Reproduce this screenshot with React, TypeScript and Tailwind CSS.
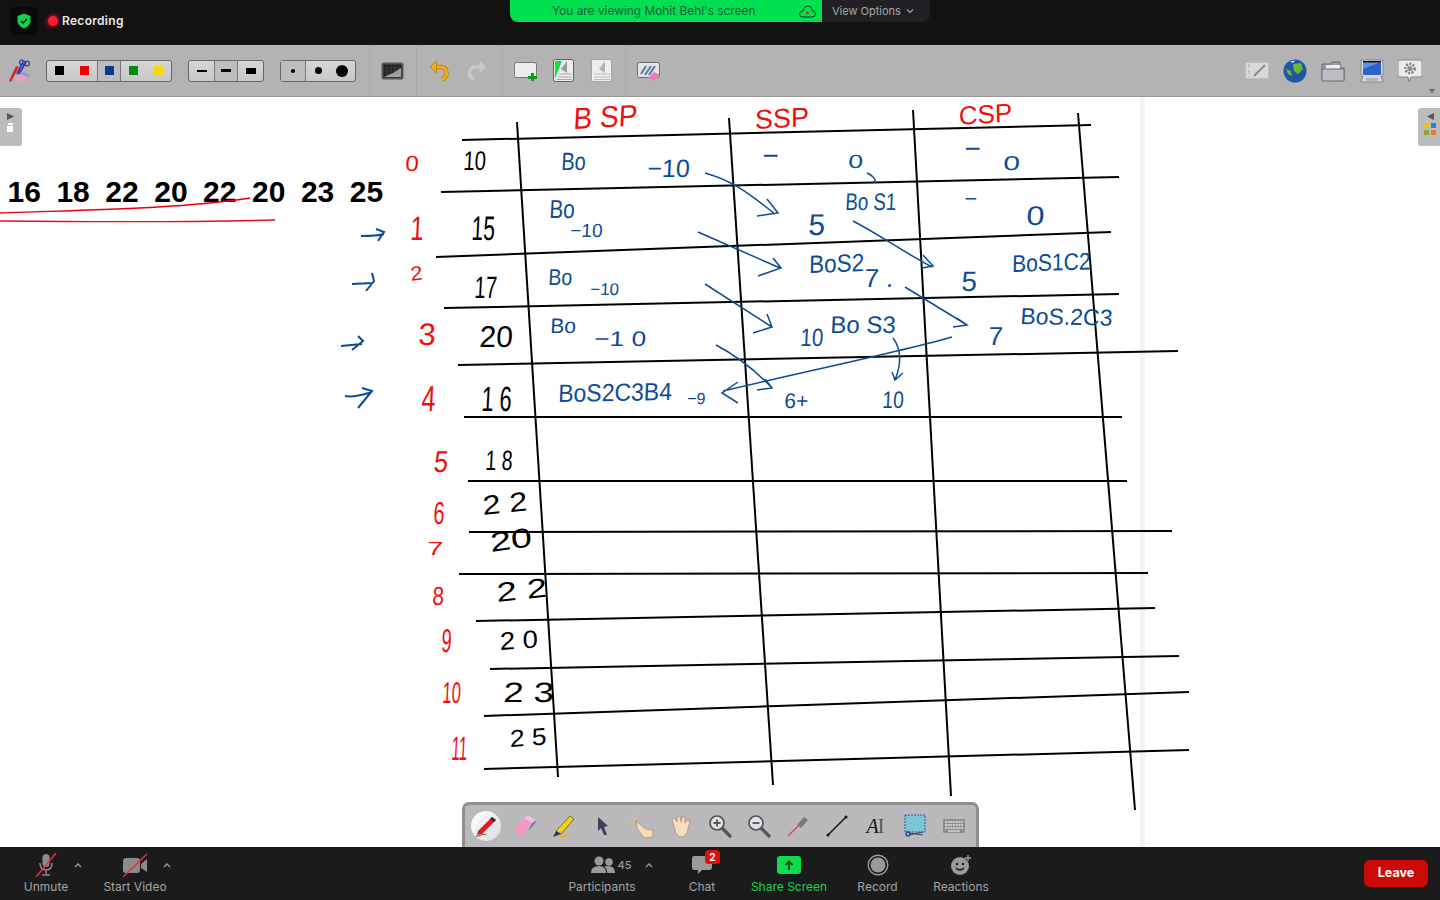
import type { ReactNode } from "react";

const BLUE = "#0d4c94";
const RED = "#f20d0d";

type Ink = { t: string; x: number; y: number; s: number; r?: number; sk?: number; sx?: number };

const gridLines = [
  "462,140 1091,125",
  "441,192 1119,177",
  "436,257 1111,232",
  "444,308 1119,294",
  "458,365 1178,351",
  "464,417 1122,417",
  "468,481 1127,481",
  "469,532 1172,531",
  "459,574 1148,573",
  "476,621 1155,608",
  "490,669 1179,656",
  "484,716 1189,692",
  "484,769 1189,750",
  "517,122 558,777",
  "729,118 773,785",
  "913,110 951,796",
  "1078,113 1135,810",
];

const redInk: Ink[] = [
  { t: "B SP", x: 573, y: 129, s: 30, r: -3, sk: -6, sx: 0.94 },
  { t: "SSP", x: 755, y: 129, s: 27, r: -3 },
  { t: "CSP", x: 959, y: 125, s: 26, r: -4 },
  { t: "0", x: 405, y: 171, s: 22, sx: 1.1 },
  { t: "1", x: 410, y: 240, s: 34, sx: 0.7 },
  { t: "2", x: 411, y: 281, s: 20, r: -8, sx: 1.1 },
  { t: "3", x: 418, y: 345, s: 31 },
  { t: "4", x: 421, y: 411, s: 36, sx: 0.7 },
  { t: "5", x: 433, y: 472, s: 30, sk: -6, sx: 0.85 },
  { t: "6", x: 433, y: 524, s: 32, sx: 0.62 },
  { t: "7", x: 427, y: 555, s: 19, sx: 1.5 },
  { t: "8", x: 432, y: 605, s: 26, sx: 0.8 },
  { t: "9", x: 441, y: 652, s: 33, sx: 0.55 },
  { t: "10", x: 442, y: 703, s: 30, sx: 0.55 },
  { t: "11", x: 451, y: 760, s: 34, sx: 0.45 },
];

const blackInk: Ink[] = [
  { t: "10", x: 463, y: 170, s: 27, sx: 0.75 },
  { t: "15", x: 471, y: 240, s: 34, sx: 0.62 },
  { t: "17", x: 474, y: 298, s: 31, sx: 0.65 },
  { t: "20", x: 479, y: 347, s: 30 },
  { t: "1 6", x: 481, y: 411, s: 35, sx: 0.62 },
  { t: "1 8", x: 485, y: 470, s: 28, sx: 0.7 },
  { t: "2 2", x: 483, y: 515, s: 27, r: -6, sx: 1.2 },
  { t: "20", x: 491, y: 552, s: 27, r: -8, sx: 1.4 },
  { t: "2 2", x: 497, y: 602, s: 27, r: -6, sx: 1.35 },
  { t: "2 0", x: 500, y: 650, s: 25, r: -4, sx: 1.1 },
  { t: "2 3", x: 503, y: 702, s: 28, sx: 1.3 },
  { t: "2 5", x: 510, y: 747, s: 24, r: -4, sx: 1.1 },
];

const blueInk: Ink[] = [
  { t: "Bo", x: 561, y: 170, s: 25, sx: 0.8 },
  { t: "−10", x: 647, y: 177, s: 25 },
  { t: "−", x: 762, y: 165, s: 28 },
  { t: "0", x: 848, y: 168, s: 19, sx: 1.4 },
  { t: "−", x: 964, y: 158, s: 28 },
  { t: "0", x: 1003, y: 170, s: 20, sx: 1.5 },
  { t: "Bo", x: 549, y: 218, s: 26, sx: 0.8 },
  { t: "−10", x: 570, y: 237, s: 19 },
  { t: "5", x: 808, y: 235, s: 30 },
  { t: "Bo S1", x: 845, y: 210, s: 24, sx: 0.78 },
  { t: "−", x: 964, y: 206, s: 22 },
  { t: "0", x: 1026, y: 225, s: 27, sx: 1.2 },
  { t: "Bo", x: 548, y: 285, s: 23, sx: 0.85 },
  { t: "−10", x: 590, y: 295, s: 17 },
  { t: "BoS2", x: 809, y: 273, s: 25, r: -2, sx: 0.9 },
  { t: "7 .", x: 864, y: 287, s: 26 },
  { t: "5", x: 961, y: 291, s: 28 },
  { t: "BoS1C2", x: 1012, y: 272, s: 24, r: -2, sx: 0.88 },
  { t: "Bo", x: 550, y: 333, s: 21 },
  { t: "−1 0", x: 594, y: 346, s: 21, sx: 1.25 },
  { t: "10", x: 800, y: 346, s: 25, sx: 0.82 },
  { t: "Bo S3", x: 830, y: 333, s: 24 },
  { t: "7", x: 988, y: 345, s: 26 },
  { t: "BoS.2C3", x: 1020, y: 324, s: 23, r: 1 },
  { t: "BoS2C3B4", x: 558, y: 402, s: 25, r: -1, sx: 0.92 },
  { t: "−9", x: 687, y: 404, s: 16 },
  { t: "6+", x: 784, y: 408, s: 21 },
  { t: "10", x: 882, y: 408, s: 24, sx: 0.8 },
];

const thinArrows = [
  "M705 173 C730 180 745 190 775 214 M767 199 L778 213 L757 216",
  "M698 232 L780 268 M773 258 L781 268 L758 276",
  "M705 284 L772 327 M767 314 L772 327 L753 333",
  "M716 345 C735 355 755 370 772 388 M765 379 L772 388 L757 390",
  "M952 337 C900 352 820 368 723 391 M738 382 L722 393 L738 403",
  "M853 221 C880 235 900 250 932 267 M923 255 L933 266 L922 268",
  "M905 287 L967 325 M957 318 L967 325 L953 327",
  "M893 338 C902 350 901 365 895 380 M892 372 L895 380 L903 373",
  "M867 173 C872 175 875 178 876 183",
];

const sideArrows = [
  "M361 236 C370 236 378 236 384 234 M376 229 L384 232 L378 241",
  "M352 284 L373 283 M372 273 L374 281 L366 291",
  "M341 346 L362 344 M358 336 L363 341 L352 350",
  "M345 396 C355 398 365 394 372 392 M362 388 L372 391 L358 408",
];

function InkText({ items, color }: { items: Ink[]; color: string }) {
  return (
    <g fill={color}>
      {items.map((i, n) => (
        <text
          key={n}
          x={0}
          y={0}
          fontSize={i.s}
          transform={`translate(${i.x} ${i.y}) rotate(${i.r ?? 0}) skewX(${i.sk ?? -3}) scale(${i.sx ?? 1} 1)`}
        >
          {i.t}
        </text>
      ))}
    </g>
  );
}

function Board() {
  return (
    <svg viewBox="0 97 1440 750" className="block w-full h-full [font-family:'Liberation_Sans',sans-serif]">
      <rect x="1140" y="97" width="5" height="750" fill="#f3f3f3" />
      <text x="7.5" y="202" fontSize="30" fontWeight="700" wordSpacing="7.2" fill="#000">
        16 18 22 20 22 20 23 25
      </text>
      <path d="M0 213 C80 210 180 209 250 198" stroke="#e8000f" strokeWidth="1.4" fill="none" />
      <path d="M0 221 C100 222 200 222 275 220" stroke="#e2101c" strokeWidth="1.4" fill="none" />
      {gridLines.map((l) => (
        <polyline key={l} points={l} stroke="#000" strokeWidth="2" fill="none" />
      ))}
      <InkText items={redInk} color={RED} />
      <InkText items={blackInk} color="#000" />
      <InkText items={blueInk} color={BLUE} />
      {thinArrows.map((d) => (
        <path key={d} d={d} stroke={BLUE} strokeWidth="1.5" fill="none" />
      ))}
      {sideArrows.map((d) => (
        <path key={d} d={d} stroke={BLUE} strokeWidth="2" fill="none" />
      ))}
    </svg>
  );
}

function Ic({ w, h, children, className }: { w: number; h: number; children: ReactNode; className?: string }) {
  return (
    <svg width={w} height={h} viewBox={`0 0 ${w} ${h}`} className={`block shrink-0 ${className ?? ""}`}>
      {children}
    </svg>
  );
}

function Separator({ className }: { className: string }) {
  return <div className={`h-[52px] border-l border-dotted border-[#a2a2a2] ${className}`} />;
}

function ToolbarIcons() {
  return (
    <div className="h-[52px] bg-[#b3b3b3] border-b border-[#989898] flex items-center shrink-0">
      <Ic w={22} h={24} className="ml-2">
        <path d="M1 22 L8 7 L11 8 L3 23 Z" fill="#d8242c" />
        <path d="M9 15 L15 3 M18 3 L11 15" stroke="#3a3fa8" strokeWidth="1.8" fill="none" />
        <circle cx="14" cy="3.5" r="2.4" fill="none" stroke="#3a3fa8" strokeWidth="1.3" />
        <circle cx="19" cy="4.5" r="2.4" fill="none" stroke="#3a3fa8" strokeWidth="1.3" />
        <path d="M7 20 L15 13 L22 16 L14 23 Z" fill="#f39ac6" />
        <path d="M15 13 L22 16 L20 18 L13 15 Z" fill="#7d9ad0" />
      </Ic>
      <div className="ml-4 w-[126px] h-[22px] flex rounded-[3px] border border-[#666] bg-gradient-to-b from-[#d6d6d6] to-[#c8c8c8]">
        <div className="w-[50px] flex items-center justify-around">
          <span className="w-[9px] h-[9px] bg-black" />
          <span className="w-[9px] h-[9px] bg-[#f00000]" />
        </div>
        <div className="w-6 flex items-center justify-center border-x border-[#777] bg-[#bdbdbd]">
          <span className="w-[9px] h-[9px] bg-[#0b3a8c]" />
        </div>
        <div className="flex-1 flex items-center justify-around">
          <span className="w-[9px] h-[9px] bg-[#0a8a0a]" />
          <span className="w-[9px] h-[9px] bg-[#f5dc00]" />
        </div>
      </div>
      <div className="ml-4 w-[76px] h-[22px] flex rounded-[3px] border border-[#666] bg-gradient-to-b from-[#d6d6d6] to-[#c8c8c8]">
        <div className="w-[25px] flex items-center justify-center">
          <span className="w-[10px] h-[2px] bg-black" />
        </div>
        <div className="w-6 flex items-center justify-center border-x border-[#777] bg-[#bdbdbd]">
          <span className="w-[10px] h-[3px] bg-black" />
        </div>
        <div className="flex-1 flex items-center justify-center">
          <span className="w-[10px] h-[6px] bg-black" />
        </div>
      </div>
      <div className="ml-4 w-[76px] h-[22px] flex rounded-[3px] border border-[#666] bg-gradient-to-b from-[#d6d6d6] to-[#c8c8c8]">
        <div className="w-[25px] flex items-center justify-center border-r border-[#777] bg-[#bdbdbd]">
          <span className="w-1 h-1 rounded-full bg-black" />
        </div>
        <div className="flex-1 flex items-center justify-around pl-[2px]">
          <span className="w-[7px] h-[7px] rounded-full bg-black" />
          <span className="w-3 h-3 rounded-full bg-black" />
        </div>
      </div>
      <Separator className="ml-[13px]" />
      <Ic w={23} h={18} className="ml-[11px]">
        <rect x="0.5" y="0.5" width="22" height="17" rx="2" fill="#55575a" />
        <rect x="2.5" y="2.5" width="18" height="13" fill="#1d1d1d" />
        <path d="M6 3 V15 M10 3 V15 M14 3 V15 M18 3 V15 M3 6 H20 M3 9 H20 M3 12 H20" stroke="#4a4a4a" strokeWidth="0.7" />
        <path d="M3 15 L12 11 L20 6 L20 15 Z" fill="#a0a0a0" />
      </Ic>
      <Separator className="ml-3" />
      <Ic w={20} h={22} className="ml-3">
        <path d="M5.5 7 H11 Q17.5 7 17.5 13 Q17.5 17.5 13 19.5" stroke="#b9780a" strokeWidth="4.4" fill="none" />
        <path d="M5.5 7 H11 Q17.5 7 17.5 13 Q17.5 17.5 13 19.5" stroke="#f0ad1c" strokeWidth="3" fill="none" />
        <path d="M7.5 1 L1 7 L7.5 13 Z" fill="#f0ad1c" stroke="#b9780a" strokeWidth="0.8" />
      </Ic>
      <Ic w={20} h={22} className="ml-[18px]">
        <path d="M14.5 7 H9 Q2.5 7 2.5 13 Q2.5 17.5 7 19.5" stroke="#c8c8c8" strokeWidth="3.6" fill="none" />
        <path d="M12.5 1 L19 7 L12.5 13 Z" fill="#c8c8c8" />
      </Ic>
      <Separator className="ml-[15px]" />
      <Ic w={24} h={20} className="ml-[11px]">
        <rect x="0.5" y="1.5" width="22" height="15" rx="2" fill="#ececec" stroke="#777" />
        <path d="M17 12 h3 v3 h3 v3 h-3 v2 h-3 v-2 h-3 v-3 h3 Z" fill="#0f9d1f" />
      </Ic>
      <Ic w={21} h={23} className="ml-[15px]">
        <rect x="0.5" y="0.5" width="20" height="22" rx="2" fill="#eeeeee" stroke="#5c5c66" />
        <path d="M2 2 H9 L2 20 Z" fill="#12e040" />
        <path d="M14 2 L8 10 L14 14 Z" fill="#9a9a9a" />
        <path d="M6 15 H19 M5 18 H19 M4 20.5 H19" stroke="#a8a8a8" />
      </Ic>
      <Ic w={21} h={23} className="ml-[17px]">
        <rect x="0.5" y="0.5" width="20" height="22" rx="2" fill="#eeeeee" stroke="#a5a5a5" />
        <path d="M14 2 L8 10 L14 14 Z" fill="#b5b5b5" />
        <path d="M3 15 H19 M3 18 H19 M3 20.5 H19" stroke="#bdbdbd" />
      </Ic>
      <Separator className="ml-[13px]" />
      <Ic w={24} h={22} className="ml-[11px]">
        <rect x="0.5" y="2.5" width="22" height="15" rx="2" fill="#e5e5e8" stroke="#6b6b6b" />
        <path d="M4 14 L9 6 M8 15 L14 6 M12 15 L18 6" stroke="#5f7cab" strokeWidth="2.2" />
        <path d="M11 18 L17 12 L23 15 L17 21 Z" fill="#f279b5" />
      </Ic>

      <div className="ml-auto flex items-center pr-[18px]">
        <Ic w={24} h={17}>
          <rect x="0.5" y="0.5" width="23" height="16" rx="1" fill="#d9d9d9" stroke="#bdbdbd" />
          <path d="M4 2 V15" stroke="#aaa" strokeDasharray="4 2" />
          <path d="M9 14 L20 3" stroke="#8c8c8c" strokeWidth="2" />
        </Ic>
        <Ic w={24} h={24} className="ml-[14px]">
          <circle cx="12" cy="12" r="11.5" fill="#1f56a8" />
          <path d="M10 5 L18 4 L20 10 L15 15 L11 12 Z M3 10 L8 12 L9 17 L5 15 Z" fill="#6cb63a" />
          <path d="M7 2.5 L12 1.5 L10 4 Z" fill="#dfe8f5" />
        </Ic>
        <Ic w={24} h={22} className="ml-[14px]">
          <path d="M1 4 H9 L11 2 H19 V8 H23 V20 H1 Z" fill="#9b9ba3" stroke="#6d6d74" />
          <path d="M5 5 H19 V9 H5 Z" fill="#ececec" />
          <path d="M1 9 H23 V21 H1 Z" fill="#bcbcc4" stroke="#6d6d74" />
        </Ic>
        <Ic w={24} h={24} className="ml-[15px]">
          <path d="M1 1 H23 V17 H21 L23 23 H1 L3 17 H1 Z" fill="#d8d8d8" stroke="#888" />
          <rect x="3" y="3" width="18" height="13" fill="#2b63c8" />
          <path d="M3 3 H21 L3 10 Z" fill="#5f94e6" />
          <rect x="3" y="2" width="18" height="1.5" fill="#111" />
          <path d="M6 19 H18 V22 H6 Z" fill="#b3b3b3" />
        </Ic>
        <Ic w={24} h={24} className="ml-[14px]">
          <path d="M2 1 H22 Q24 1 24 3 V16 Q24 18 22 18 H13 L11 23 L10 18 H2 Q0 18 0 16 V3 Q0 1 2 1 Z" fill="#ececec" stroke="#888" />
          <circle cx="12" cy="9.5" r="4.6" fill="none" stroke="#7c7c7c" strokeWidth="2.5" strokeDasharray="2 1.4" />
          <circle cx="12" cy="9.5" r="2.6" fill="#8d8d8d" />
        </Ic>
      </div>
    </div>
  );
}

function SideTabs() {
  return (
    <>
      <div className="absolute left-0 top-[11px] w-[22px] h-[38px] bg-[#bcbcbc] rounded-r-[3px] flex flex-col items-center pt-[5px] pr-[2px]">
        <Ic w={7} h={7}><path d="M0 0 L7 3.5 L0 7 Z" fill="#555" /></Ic>
        <span className="mt-[3px] w-[5px] h-[2px] bg-white" />
        <span className="mt-[1px] w-[6px] h-[6px] bg-white" />
      </div>
      <div className="absolute right-0 top-[11px] w-[22px] h-[38px] bg-[#bcbcbc] rounded-l-[3px] flex flex-col items-center pt-[5px] pl-[2px]">
        <Ic w={7} h={7}><path d="M7 0 L0 3.5 L7 7 Z" fill="#555" /></Ic>
        <div className="mt-[3px] grid grid-cols-2 gap-[2px]">
          <span className="w-[5px] h-[5px] bg-[#e8c020]" />
          <span className="w-[5px] h-[5px] bg-[#1e88d8]" />
          <span className="w-[5px] h-[5px] bg-[#88a838]" />
          <span className="w-[5px] h-[5px] bg-[#f07828]" />
        </div>
      </div>
    </>
  );
}

function Palette() {
  const tools: ReactNode[] = [
    <div key="pen" className="w-[30px] h-[30px] rounded-full bg-gradient-to-br from-white to-[#dcdcdc] flex items-center justify-center">
      <Ic w={24} h={24}>
        <path d="M4 17 L18 3 L22 6 L8 20 L3 21 Z" fill="#e01b24" />
        <path d="M18 3 L22 6 L20 8 L16 5 Z" fill="#333" />
        <path d="M2 22 C7 23 9 18 12 21" stroke="#444" fill="none" />
      </Ic>
    </div>,
    <Ic key="eraser" w={24} h={22}>
      <path d="M1 14 L11 3 L19 8 L9 21 Z" fill="#f59ac4" />
      <path d="M11 3 L15 1 L23 5 L19 8 Z" fill="#f9bddb" />
      <path d="M19 8 L23 5 L22 9 L15 16 Z" fill="#5f86c6" />
    </Ic>,
    <Ic key="marker" w={24} h={24}>
      <path d="M4 17 L18 2 L22 5 L9 20 Z" fill="#f2d40f" stroke="#5a5a20" strokeWidth="0.8" />
      <path d="M1 23 L4 17 L9 20 Z" fill="#3a3a30" />
      <path d="M6 23 L18 20 L14 23 Z" fill="#e6b80a" />
    </Ic>,
    <Ic key="arrow" w={14} h={20}>
      <path d="M2 1 L12 10 L8 11 L11 19 L8 19 L5 12 L2 15 Z" fill="#3e4058" />
    </Ic>,
    <Ic key="point" w={26} h={26}>
      <path d="M2 3 L5 6 M8 1 V5 M1 9 H5" stroke="#e6d320" />
      <path d="M7 8 L17 16 L24 17 L24 24 L15 25 L10 18 L8 15 Z" fill="#f6d9bd" stroke="#a8876a" strokeWidth="0.7" />
    </Ic>,
    <Ic key="hand" w={22} h={24}>
      <path d="M3 9 L2 5 L5 4 L7 8 L7 3 L10 2 L11 8 L12 3 L15 3 L15 9 L17 6 L20 7 L18 15 Q17 22 11 23 Q6 22 5 16 Z" fill="#f6dcc2" stroke="#a8876a" strokeWidth="0.7" />
    </Ic>,
    <Ic key="zoomin" w={24} h={24}>
      <path d="M14 14 L22 22" stroke="#555" strokeWidth="3.2" strokeLinecap="round" />
      <circle cx="9" cy="9" r="7" fill="#dfe2e6" stroke="#555" strokeWidth="1.7" />
      <path d="M5.5 9 H12.5 M9 5.5 V12.5" stroke="#555" strokeWidth="1.8" />
    </Ic>,
    <Ic key="zoomout" w={24} h={24}>
      <path d="M14 14 L22 22" stroke="#555" strokeWidth="3.2" strokeLinecap="round" />
      <circle cx="9" cy="9" r="7" fill="#dfe2e6" stroke="#555" strokeWidth="1.7" />
      <path d="M5.5 9 H12.5" stroke="#555" strokeWidth="1.8" />
    </Ic>,
    <Ic key="laser" w={24} h={24}>
      <path d="M11 11 L18 3 L22 6 L15 14 Z" fill="#7a7a7e" />
      <path d="M2 22 L12 12" stroke="#e0404c" strokeWidth="1.2" />
    </Ic>,
    <Ic key="line" w={22} h={22}>
      <path d="M2 20 L20 2" stroke="#111" strokeWidth="1.4" />
      <circle cx="2" cy="20" r="1.5" fill="#111" />
      <circle cx="20" cy="2" r="1.5" fill="#111" />
    </Ic>,
    <span key="text" className="text-[20px] leading-none text-[#111] italic [font-family:'Liberation_Serif',serif] flex items-center">
      A<span className="not-italic font-light text-[#555] -ml-[1px]">I</span>
    </span>,
    <Ic key="capture" w={22} h={24}>
      <rect x="1" y="1" width="20" height="17" fill="#7cc4d8" stroke="#2a5aa8" strokeDasharray="2 1" />
      <circle cx="4" cy="20" r="2" fill="none" stroke="#2a3f98" strokeWidth="1.4" />
      <path d="M5 19 L19 21 M5 21 L19 18" stroke="#404060" />
    </Ic>,
    <Ic key="keys" w={22} h={14}>
      <rect x="0" y="0" width="22" height="14" rx="1" fill="#8d8d8d" />
      <path d="M2 3 H20 M2 6 H20 M2 9 H20" stroke="#e3e3e3" strokeWidth="1.4" strokeDasharray="2 0.7" />
      <path d="M5 12 H17" stroke="#e3e3e3" strokeWidth="1.2" />
    </Ic>,
  ];
  return (
    <div className="absolute bottom-0 left-[462px] w-[517px] h-[45px] bg-[#bbb9bb] border-[3px] border-b-0 border-[#8f8f8f] rounded-t-[7px] flex items-center pl-[1px]">
      {tools.map((t, i) => (
        <div key={i} className="w-[39px] flex items-center justify-center">
          {t}
        </div>
      ))}
    </div>
  );
}

function Caret({ className }: { className: string }) {
  return (
    <Ic w={20} h={8} className={`mt-[14px] ${className}`}>
      <path d="M7 6 L10 3 L13 6" stroke="#9a9a9a" strokeWidth="1.4" fill="none" />
    </Ic>
  );
}

function BarButton({ label, icon, className, green }: { label: string; icon: ReactNode; className: string; green?: boolean }) {
  return (
    <div className={`flex flex-col items-center pt-[6px] shrink-0 ${className}`}>
      <div className="h-6 flex items-center justify-center">{icon}</div>
      <span className={`mt-[2px] text-[12px] leading-4 whitespace-nowrap ${green ? "text-[#12d64c]" : "text-[#a3a3a3]"}`}>
        {label}
      </span>
    </div>
  );
}

function MeetingBar() {
  return (
    <div className="h-[53px] bg-[#1b1b1b] flex items-start shrink-0 [font-family:Inter,sans-serif]">
      <BarButton
        label="Unmute"
        className="ml-6 w-11"
        icon={
          <Ic w={24} h={24}>
            <rect x="8.5" y="1" width="7" height="13" rx="3.5" fill="#8b8b8b" />
            <path d="M6 10 Q6 17 12 17 Q18 17 18 10 M12 17 V21 M8 22 H16" stroke="#8b8b8b" strokeWidth="1.5" fill="none" />
            <path d="M2 24 L22 0" stroke="#e2323c" strokeWidth="1.5" />
          </Ic>
        }
      />
      <Caret className="" />
      <BarButton
        label="Start Video"
        className="ml-[15px] w-16"
        icon={
          <Ic w={26} h={24}>
            <rect x="1" y="5" width="17" height="15" rx="3" fill="#8b8b8b" />
            <path d="M19 11 L25 6 V19 L19 15 Z" fill="#8b8b8b" />
            <path d="M1 24 L25 1" stroke="#e2323c" strokeWidth="1.5" />
          </Ic>
        }
      />
      <Caret className="-ml-[10px]" />
      <BarButton
        label="Participants"
        className="ml-[391px] w-[68px]"
        icon={
          <div className="flex items-center gap-[2px] pl-[19px]">
            <Ic w={24} h={18}>
              <circle cx="8" cy="5" r="4.5" fill="#9a9a9a" />
              <circle cx="18" cy="6" r="3.8" fill="#9a9a9a" />
              <path d="M0 17 Q0 10 8 10 Q15 10 15 17 Z" fill="#9a9a9a" />
              <path d="M16 17 Q16 12 13 10.5 Q24 8 24 17 Z" fill="#9a9a9a" />
            </Ic>
            <span className="text-[11px] font-medium text-[#9a9a9a]">45</span>
          </div>
        }
      />
      <Caret className="ml-[3px]" />
      <BarButton
        label="Chat"
        className="ml-[29px] w-7"
        icon={
          <div className="relative">
            <Ic w={22} h={20}>
              <path d="M3 1 H18 Q21 1 21 4 V12 Q21 15 18 15 H11 L7 19 V15 H3 Q1 15 1 12 V4 Q1 1 3 1 Z" fill="#9a9a9a" />
            </Ic>
            <span className="absolute -top-[5px] -right-[7px] w-[15px] h-[14px] rounded-[4px] bg-[#e01010] text-white text-[10px] font-bold leading-[14px] text-center">
              2
            </span>
          </div>
        }
      />
      <BarButton
        label="Share Screen"
        green
        className="ml-[35px] w-[76px]"
        icon={
          <div className="w-6 h-[18px] rounded-[3px] bg-[#0fdc4c] flex items-center justify-center">
            <Ic w={10} h={11}>
              <path d="M5 10 V2 M1.5 5 L5 1.5 L8.5 5" stroke="#0b2a12" strokeWidth="1.6" fill="none" />
            </Ic>
          </div>
        }
      />
      <BarButton
        label="Record"
        className="ml-[30px] w-[41px]"
        icon={
          <Ic w={22} h={22}>
            <circle cx="11" cy="11" r="9.8" fill="none" stroke="#9a9a9a" strokeWidth="1.4" />
            <circle cx="11" cy="11" r="7.5" fill="#9a9a9a" />
          </Ic>
        }
      />
      <BarButton
        label="Reactions"
        className="ml-[35px] w-14"
        icon={
          <Ic w={22} h={22}>
            <circle cx="10" cy="12" r="9" fill="#9a9a9a" />
            <circle cx="7" cy="10" r="1.2" fill="#1b1b1b" />
            <circle cx="13" cy="10" r="1.2" fill="#1b1b1b" />
            <path d="M6 14 Q10 18 14 14" stroke="#1b1b1b" strokeWidth="1.3" fill="none" />
            <path d="M18 1 V7 M15 4 H21" stroke="#9a9a9a" strokeWidth="1.3" />
          </Ic>
        }
      />
      <button className="ml-auto mr-3 mt-[13px] w-16 h-[27px] rounded-md bg-[#cc0a0a] text-white text-[12.5px] font-bold">
        Leave
      </button>
    </div>
  );
}

export default function App() {
  return (
    <div className="w-[1440px] h-[900px] overflow-hidden flex flex-col bg-white [font-family:Inter,sans-serif]">
      <div className="relative h-[45px] bg-[#121212] flex items-center pb-[3px] shrink-0">
        <div className="ml-[10px] w-7 h-7 rounded-md bg-[#0a0a0a] flex items-center justify-center">
          <Ic w={14} h={16}>
            <path d="M7 0.5 L13.5 3 V8 Q13.5 13 7 15.5 Q0.5 13 0.5 8 V3 Z" fill="#14d04c" />
            <path d="M4 8 L6.2 10.2 L10 5.8" stroke="#06240f" strokeWidth="1.5" fill="none" />
          </Ic>
        </div>
        <span className="ml-[10px] w-[10px] h-[10px] rounded-full bg-[#ff1a2e] shadow-[0_0_5px_#ff1a2e]" />
        <span className="ml-[4px] text-[12px] font-semibold tracking-[0.3px] text-[#e8e8e8]">Recording</span>
        <div className="absolute left-[510px] top-0 h-[22px] w-[420px] flex rounded-b-lg overflow-hidden">
          <div className="w-[312px] bg-[#00e050] flex items-center pl-[42px]">
            <span className="text-[11.9px] text-[#1b5e3a] whitespace-nowrap">You are viewing Mohit Behl's screen</span>
            <Ic w={17} h={13} className="ml-[43px]">
              <path d="M4 12 Q0.5 12 0.5 9 Q0.5 6 4 6 Q5 1 9 1 Q13 1 13 5.5 Q16.5 6 16.5 9 Q16.5 12 13 12 Z" fill="none" stroke="#0f3a20" />
              <circle cx="8.5" cy="8" r="1.4" fill="#e01b24" />
            </Ic>
          </div>
          <div className="flex-1 bg-[#202024] flex items-center pl-[10px] gap-[5px]">
            <span className="text-[11px] text-[#a8a8a8] whitespace-nowrap">View Options</span>
            <Ic w={8} h={6}>
              <path d="M1 1.5 L4 4.5 L7 1.5" stroke="#a8a8a8" strokeWidth="1.2" fill="none" />
            </Ic>
          </div>
        </div>
      </div>

      <div className="relative">
        <ToolbarIcons />
        <div className="absolute right-[5px] bottom-[4px] w-0 h-0 border-x-[3px] border-x-transparent border-t-[4px] border-t-[#666]" />
      </div>

      <div className="relative flex-1 min-h-0 bg-white">
        <Board />
        <SideTabs />
        <Palette />
      </div>

      <MeetingBar />
    </div>
  );
}
